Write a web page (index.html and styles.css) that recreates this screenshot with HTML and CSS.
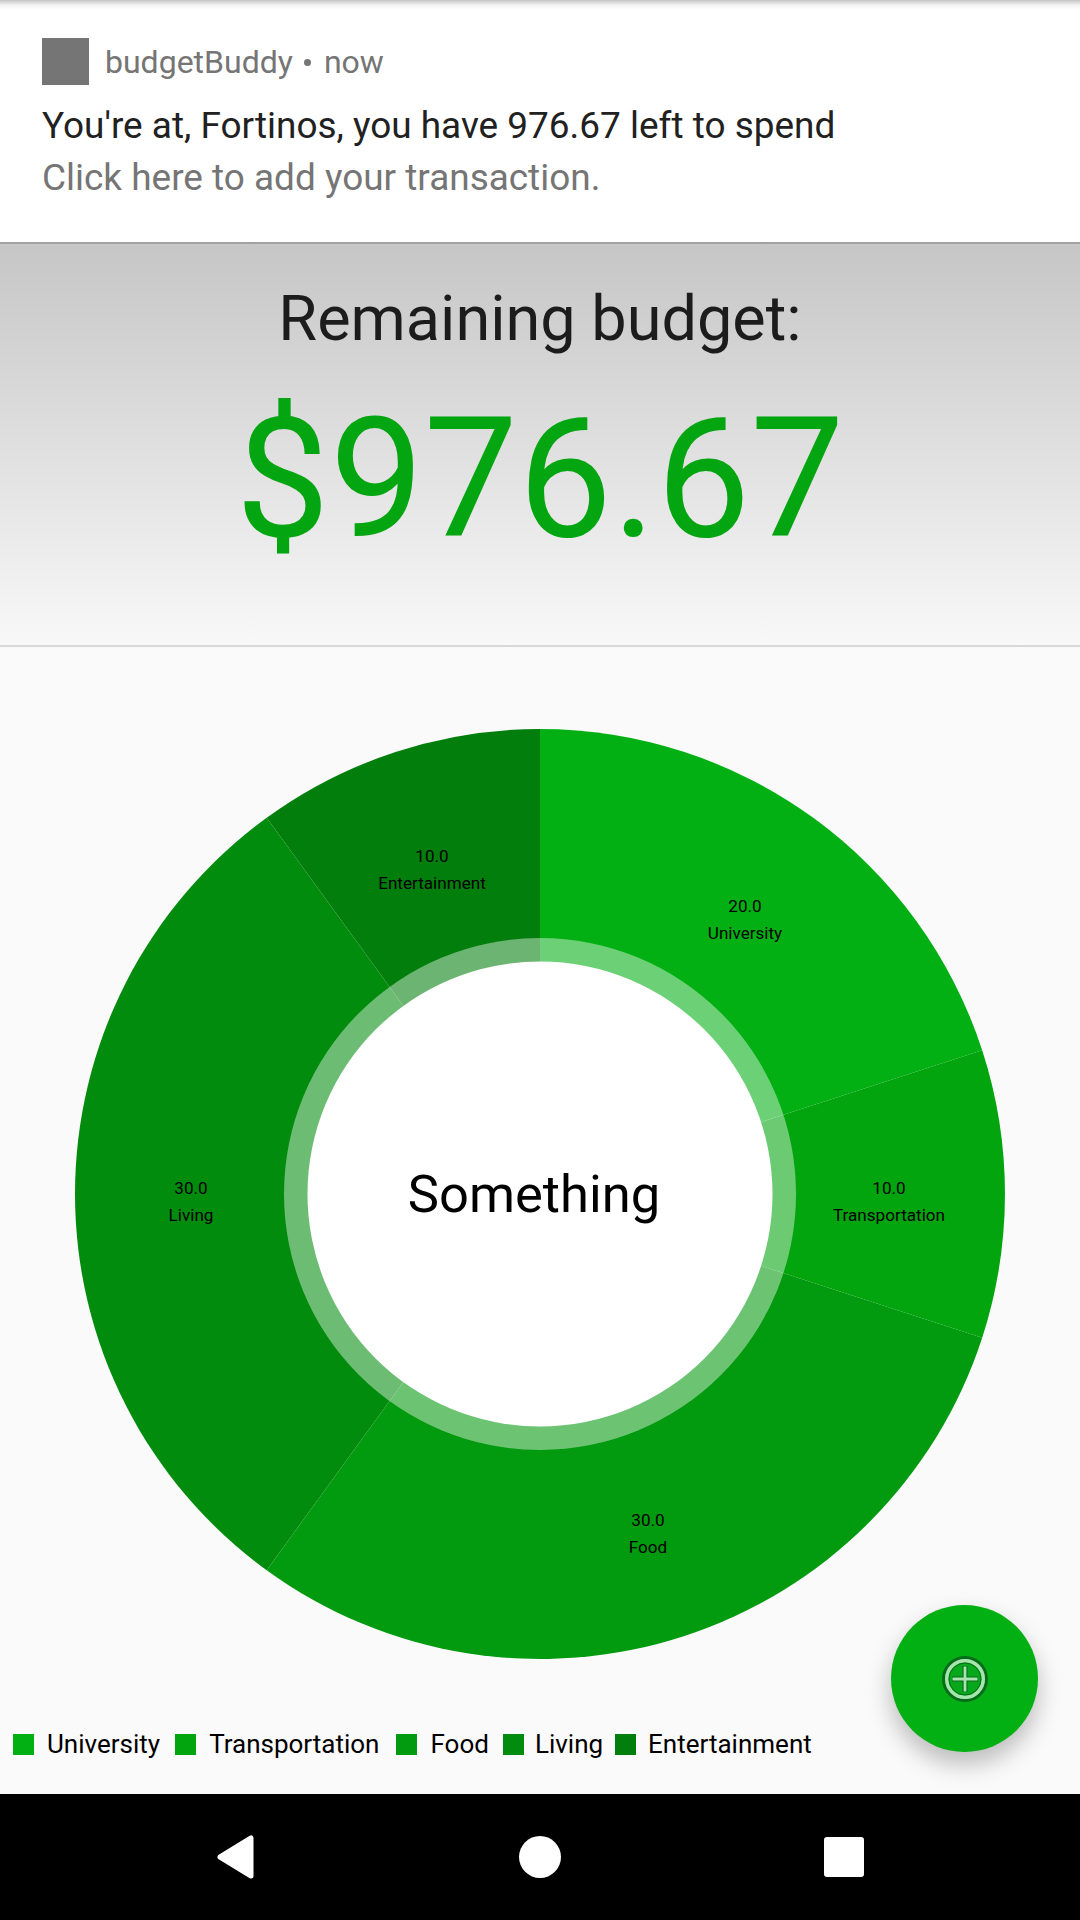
FILE: index.html
```html
<!DOCTYPE html>
<html lang="en">
<head>
    <meta charset="UTF-8">
    <meta name="viewport" content="width=device-width, initial-scale=1.0">
    <title>budgetBuddy</title>
    <link rel="stylesheet" href="styles.css">
</head>
<body>
    <div class="notification">
        <div class="notification-head">
            <div class="app-icon"></div>
            <span>budgetBuddy</span>
            <span class="dot"></span>
            <span>now</span>
        </div>
        <p class="notification-title">You're at, Fortinos, you have 976.67 left to spend</p>
        <p class="notification-text">Click here to add your transaction.</p>
    </div>

    <div class="budget">
        <h1>Remaining budget:</h1>
        <div class="amount">$976.67</div>
    </div>

    <div class="content">
        <svg class="chart" viewBox="0 0 1080 1040" width="1080" height="1040">
            <path class="slice-university" d="M540 547 L540 82 A465 465 0 0 1 982.2 403.3 Z"/>
            <path class="slice-transportation" d="M540 547 L982.2 403.3 A465 465 0 0 1 982.2 690.7 Z"/>
            <path class="slice-food" d="M540 547 L982.2 690.7 A465 465 0 0 1 266.7 923.2 Z"/>
            <path class="slice-living" d="M540 547 L266.7 923.2 A465 465 0 0 1 266.7 170.8 Z"/>
            <path class="slice-entertainment" d="M540 547 L266.7 170.8 A465 465 0 0 1 540 82 Z"/>
            <circle class="ring" cx="540" cy="547" r="256"/>
            <circle class="hole" cx="540" cy="547" r="232.5"/>
            <text class="center-label" x="534" y="565">Something</text>

            <text class="slice-label" x="745" y="265">20.0</text>
            <text class="slice-label" x="745" y="292">University</text>
            <text class="slice-label" x="889" y="547">10.0</text>
            <text class="slice-label" x="889" y="574">Transportation</text>
            <text class="slice-label" x="648" y="879">30.0</text>
            <text class="slice-label" x="648" y="906">Food</text>
            <text class="slice-label" x="191" y="547">30.0</text>
            <text class="slice-label" x="191" y="574">Living</text>
            <text class="slice-label" x="432" y="215">10.0</text>
            <text class="slice-label" x="432" y="242">Entertainment</text>
        </svg>

        <div class="legend">
            <div class="legend-item"><span class="swatch swatch-university"></span>University</div>
            <div class="legend-item"><span class="swatch swatch-transportation"></span>Transportation</div>
            <div class="legend-item legend-food"><span class="swatch swatch-food"></span>Food</div>
            <div class="legend-item legend-living"><span class="swatch swatch-living"></span>Living</div>
            <div class="legend-item legend-entertainment"><span class="swatch swatch-entertainment"></span>Entertainment</div>
        </div>

        <button class="fab">
            <svg viewBox="0 0 48 48" width="48" height="48">
                <circle class="fab-edge" cx="24" cy="24" r="21.5"/>
                <circle class="fab-ring" cx="24" cy="24" r="18.25"/>
                <circle class="fab-inner" cx="24" cy="24" r="16"/>
                <path class="fab-edge-plus" d="M24 11 V37 M11 24 H37"/>
                <path class="fab-plus" d="M24 11.5 V36.5 M11.5 24 H36.5"/>
            </svg>
        </button>
    </div>

    <div class="navbar">
        <svg viewBox="0 0 40 46" width="40" height="46">
            <path class="nav-icon" d="M35 4 V42 L4 23 Z"/>
        </svg>
        <div class="nav-home"></div>
        <div class="nav-recent"></div>
    </div>
</body>
</html>
```

FILE: styles.css
```css
body {
    margin: 0;
    padding: 0;
    width: 1080px;
    height: 1920px;
    display: flex;
    flex-direction: column;
    overflow: hidden;
    font-family: Roboto, "Liberation Sans", sans-serif;
    background-color: #fafafa;
}

.notification {
    height: 244px;
    box-sizing: border-box;
    padding: 38px 42px 0;
    background: linear-gradient(#c4c4c4 0, #f2f2f2 5px, #ffffff 10px);
    border-bottom: 2px solid #a2a2a2;
    flex-shrink: 0;
}

.notification-head {
    display: flex;
    align-items: center;
    height: 47px;
    font-size: 32px;
    line-height: 50px;
    color: #757575;
}

.app-icon {
    width: 47px;
    height: 47px;
    margin-right: 16px;
    background-color: #757575;
}

.dot {
    width: 7px;
    height: 7px;
    margin: 2px 13px 0 11px;
    border-radius: 50%;
    background-color: #757575;
}

.notification p {
    margin: 0;
    font-size: 36.95px;
    line-height: 52px;
}

.notification-title {
    margin-top: 15px !important;
    color: #212121;
}

.notification-text {
    color: #757575;
}

.budget {
    height: 403px;
    box-sizing: border-box;
    text-align: center;
    background: linear-gradient(#c6c6c6, #f8f8f8);
    border-bottom: 2px solid #d8d8d8;
    flex-shrink: 0;
}

.budget h1 {
    margin: 0;
    padding-top: 40px;
    font-size: 63px;
    line-height: 70px;
    font-weight: 400;
    color: #1c1c1c;
}

.amount {
    font-size: 167.5px;
    line-height: 197px;
    margin-top: 27px;
    color: #03a510;
}

.content {
    position: relative;
    flex: 1;
    display: flex;
    flex-direction: column;
}

.chart {
    display: block;
}

.slice-university { fill: #02b013; }
.slice-transportation { fill: #02a50d; }
.slice-food { fill: #029a0f; }
.slice-living { fill: #028c0e; }
.slice-entertainment { fill: #027e0c; }

.ring {
    fill: #ffffff;
    fill-opacity: 0.42;
}

.hole {
    fill: #ffffff;
}

.center-label {
    font-size: 52.5px;
    text-anchor: middle;
    fill: #000000;
}

.slice-label {
    font-size: 17.1px;
    text-anchor: middle;
    fill: #000000;
}

.legend {
    display: flex;
    gap: 15px;
    margin-top: 44px;
    padding-left: 13px;
}

.legend-item {
    display: flex;
    align-items: center;
    gap: 13px;
    height: 26px;
    font-size: 26px;
    color: #000000;
}

.legend-food {
    margin-left: 2px;
}

.legend-living {
    gap: 11px;
    margin-left: -1px;
}

.legend-entertainment {
    gap: 12px;
    margin-left: -3px;
}

.swatch {
    width: 21px;
    height: 21px;
}

.swatch-university { background-color: #02b013; }
.swatch-transportation { background-color: #02a50d; }
.swatch-food { background-color: #029a0f; }
.swatch-living { background-color: #028c0e; }
.swatch-entertainment { background-color: #027e0c; }

.fab {
    position: absolute;
    right: 42px;
    bottom: 42px;
    width: 147px;
    height: 147px;
    padding: 0;
    border: none;
    border-radius: 50%;
    display: flex;
    align-items: center;
    justify-content: center;
    background-color: #02b013;
    box-shadow: 0 12px 24px rgba(0, 0, 0, 0.26);
}

.fab-edge {
    fill: none;
    stroke: #0a6a1c;
    stroke-width: 3;
}

.fab-ring {
    fill: none;
    stroke: #a8e4ae;
    stroke-width: 3.5;
}

.fab-inner {
    fill: #07a81c;
    stroke: #0a6a1c;
    stroke-width: 1;
}

.fab-edge-plus {
    fill: none;
    stroke: #0a6a1c;
    stroke-width: 5;
}

.fab-plus {
    fill: none;
    stroke: #a8e4ae;
    stroke-width: 2.8;
}

.navbar {
    height: 126px;
    flex-shrink: 0;
    background-color: #000000;
    display: grid;
    grid-template-columns: repeat(3, 1fr);
    justify-items: center;
    align-items: center;
    padding: 0 84px;
    box-sizing: border-box;
}

.nav-icon {
    fill: #ffffff;
    stroke: #ffffff;
    stroke-width: 5;
    stroke-linejoin: round;
}

.nav-home {
    width: 42px;
    height: 42px;
    border-radius: 50%;
    background-color: #ffffff;
}

.nav-recent {
    width: 40px;
    height: 40px;
    border-radius: 3px;
    background-color: #ffffff;
}
```
